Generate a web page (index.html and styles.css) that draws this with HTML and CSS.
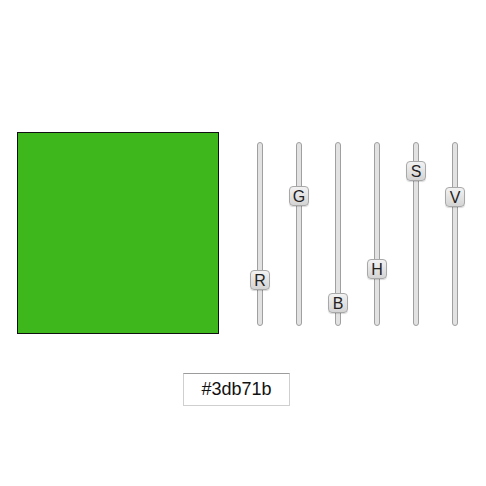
FILE: index.html
```html
<!DOCTYPE html>
<html lang="en">
<head>
    <meta charset="UTF-8">
    <title>Color Picker</title>
    <link rel="stylesheet" href="styles.css">
</head>
<body>
    <div class="picker">
        <div class="fila">
            <div class="muestra"></div>
            <div class="deslizadores">
                <div class="slider"><div class="pista"></div><div class="perilla" style="top: 128px">R</div></div>
                <div class="slider"><div class="pista"></div><div class="perilla" style="top: 44px">G</div></div>
                <div class="slider"><div class="pista"></div><div class="perilla" style="top: 151px">B</div></div>
                <div class="slider"><div class="pista"></div><div class="perilla" style="top: 117px">H</div></div>
                <div class="slider"><div class="pista"></div><div class="perilla" style="top: 19px">S</div></div>
                <div class="slider"><div class="pista"></div><div class="perilla" style="top: 45px">V</div></div>
            </div>
        </div>
        <input class="hex" type="text" value="#3db71b">
    </div>
</body>
</html>
```

FILE: styles.css
```css
body {
    margin: 0;
    padding: 0;
    background-color: #fff;
    font-family: "Liberation Sans", Arial, sans-serif;
}

.picker {
    display: flex;
    flex-direction: column;
    align-items: flex-start;
    padding-top: 132px;
}

.fila {
    display: flex;
    align-items: flex-start;
    margin-left: 17px;
}

.muestra {
    width: 200px;
    height: 200px;
    background-color: #3db71b;
    border: 1px solid #111;
}

.deslizadores {
    display: flex;
    gap: 19px;
    margin-left: 31px;
    margin-top: 10px;
}

.slider {
    position: relative;
    width: 20px;
    height: 184px;
    display: flex;
    justify-content: center;
}

.pista {
    width: 4px;
    height: 182px;
    background-color: #e2e2e2;
    border: 1px solid #a0a0a0;
    border-radius: 3px;
}

.perilla {
    position: absolute;
    left: 0;
    width: 18px;
    height: 18px;
    border: 1px solid #a8a8a8;
    border-radius: 4px;
    background: linear-gradient(#f2f2f2, #d4d4d4);
    box-shadow: 0 1px 1px rgba(0, 0, 0, 0.15);
    font-size: 16px;
    line-height: 19px;
    text-align: center;
    color: #222;
}

.hex {
    box-sizing: border-box;
    width: 107px;
    height: 33px;
    margin: 39px 0 0 183px;
    padding: 0;
    border: 1px solid #cfcfcf;
    border-top-color: #9c9c9c;
    font-family: "Liberation Sans", Arial, sans-serif;
    font-size: 18px;
    text-align: center;
    color: #111;
    outline: none;
}
```
